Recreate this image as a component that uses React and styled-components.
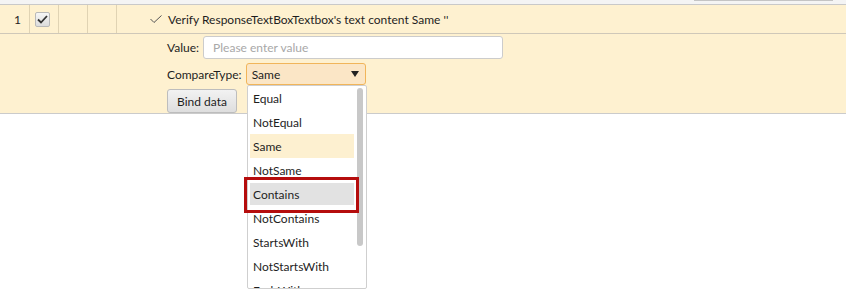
import React from "react";
import styled, { createGlobalStyle } from "styled-components";

const GlobalStyle = createGlobalStyle`
  html, body {
    margin: 0;
    padding: 0;
    background: #ffffff;
  }
  body {
    font-family: Lato, "Noto Sans", sans-serif;
    font-size: 12px;
    color: #1e1e1e;
  }
`;

const CREAM = "#fef1d0";

const options = [
  "Equal",
  "NotEqual",
  "Same",
  "NotSame",
  "Contains",
  "NotContains",
  "StartsWith",
  "NotStartsWith",
  "EndsWith",
];

const Page = styled.div`
  position: relative;
  width: 846px;
  height: 303px;
  overflow: hidden;
`;

const TopStrip = styled.div`
  height: 4px;
  background: #f4f4f4;
  border-bottom: 1px solid #c9c9c9;
  display: flex;
  justify-content: flex-end;
  padding-right: 13px;
`;

const TopScroll = styled.div`
  width: 139px;
  height: 1px;
  background: #c4c4c4;
`;

const StepRow = styled.div`
  display: flex;
  height: 28px;
  background: ${CREAM};
  border-bottom: 1px solid #cfc8b9;
`;

const Cell = styled.div`
  width: ${(p) => p.$w}px;
  flex: ${(p) => (p.$w ? "none" : "1")};
  border-right: ${(p) => (p.$w ? "1px solid #e0d3b3" : "none")};
  display: flex;
  align-items: center;
  justify-content: ${(p) => p.$justify || "flex-start"};
  box-sizing: border-box;
  padding: ${(p) => p.$pad || "0"};
`;

const Checkbox = styled.div`
  width: 15px;
  height: 15px;
  box-sizing: border-box;
  border: 1px solid #b9b9b9;
  border-radius: 2px;
  background: linear-gradient(#f6f6f6, #dcdcdc);
  display: flex;
  align-items: center;
  justify-content: center;
`;

const StepText = styled.span`
  display: flex;
  align-items: center;
  gap: 6px;
`;

const Details = styled.div`
  background: ${CREAM};
  border-bottom: 1px solid #cbcbcb;
  padding: 2px 0 2px 167px;
  display: flex;
  flex-direction: column;
  gap: 4px;
  height: 80px;
  box-sizing: border-box;
`;

const FieldRow = styled.div`
  display: flex;
  align-items: center;
  gap: 4px;
`;

const Label = styled.span``;

const TextInput = styled.div`
  width: 300px;
  height: 23px;
  box-sizing: border-box;
  border: 1px solid #cccccc;
  border-radius: 3px;
  background: #fff;
  color: #a8a8a8;
  display: flex;
  align-items: center;
  padding-left: 9px;
`;

const Select = styled.div`
  width: 120px;
  height: 22px;
  box-sizing: border-box;
  border: 1px solid #f1b55a;
  border-radius: 3px;
  background: #fbe6c6;
  display: flex;
  align-items: center;
  justify-content: space-between;
  padding: 0 6px 0 5px;
`;

const Caret = styled.span`
  width: 0;
  height: 0;
  border-left: 4px solid transparent;
  border-right: 4px solid transparent;
  border-top: 6px solid #222;
`;

const Button = styled.div`
  width: 70px;
  height: 24px;
  box-sizing: border-box;
  border: 1px solid #bdbdbd;
  border-radius: 3px;
  background: linear-gradient(#f2f2f2, #dedede);
  display: flex;
  align-items: center;
  justify-content: center;
`;

const Dropdown = styled.div`
  position: absolute;
  left: 247px;
  top: 85px;
  width: 120px;
  height: 204px;
  box-sizing: border-box;
  border: 1px solid #cfcfcf;
  border-radius: 2px;
  background: #fff;
  display: flex;
  padding: 0 3px 0 2px;
  gap: 3px;
  overflow: hidden;
`;

const OptionList = styled.div`
  flex: 1;
  display: flex;
  flex-direction: column;
  overflow: hidden;
`;

const Option = styled.div`
  flex: none;
  display: flex;
  align-items: center;
  padding-left: 3px;
  background: ${(p) => (p.$active ? "#fdf0d0" : p.$hover ? "#e2e2e2" : "transparent")};
  margin: ${(p) => (p.$hover ? "1px 0" : "0")};
  height: ${(p) => (p.$hover ? "22px" : "24px")};
`;

const ScrollThumb = styled.div`
  width: 6px;
  height: 158px;
  margin-top: 2px;
  border-radius: 3px;
  background: #c8c8c8;
`;

const Highlight = styled.div`
  position: absolute;
  left: 244px;
  top: 177px;
  width: 115px;
  height: 36px;
  box-sizing: border-box;
  border: 3px solid #b50d0d;
`;

const CheckIcon = () => (
  <svg width="11" height="9" viewBox="0 0 11 9">
    <path d="M1 4.5 L4 7.5 L10 1" fill="none" stroke="#333" strokeWidth="1.8" />
  </svg>
);

const TickIcon = () => (
  <svg width="12" height="9" viewBox="0 0 12 9">
    <path d="M0.5 4 L4 7.5 L11.5 0.5" fill="none" stroke="#555" strokeWidth="1" />
  </svg>
);

export default function App() {
  return (
    <Page>
      <GlobalStyle />
      <TopStrip>
        <TopScroll />
      </TopStrip>
      <StepRow>
        <Cell $w={30} $justify="flex-end" $pad="0 8px 0 0">1</Cell>
        <Cell $w={29} $pad="0 0 0 5px">
          <Checkbox>
            <CheckIcon />
          </Checkbox>
        </Cell>
        <Cell $w={29} />
        <Cell $w={29} />
        <Cell $pad="0 0 0 33px">
          <StepText>
            <TickIcon />
            Verify ResponseTextBoxTextbox's text content Same ''
          </StepText>
        </Cell>
      </StepRow>
      <Details>
        <FieldRow>
          <Label>Value:</Label>
          <TextInput>Please enter value</TextInput>
        </FieldRow>
        <FieldRow>
          <Label>CompareType:</Label>
          <Select>
            Same
            <Caret />
          </Select>
        </FieldRow>
        <FieldRow>
          <Button>Bind data</Button>
        </FieldRow>
      </Details>
      <Dropdown>
        <OptionList>
          {options.map((o) => (
            <Option key={o} $active={o === "Same"} $hover={o === "Contains"}>
              {o}
            </Option>
          ))}
        </OptionList>
        <ScrollThumb />
      </Dropdown>
      <Highlight />
    </Page>
  );
}
